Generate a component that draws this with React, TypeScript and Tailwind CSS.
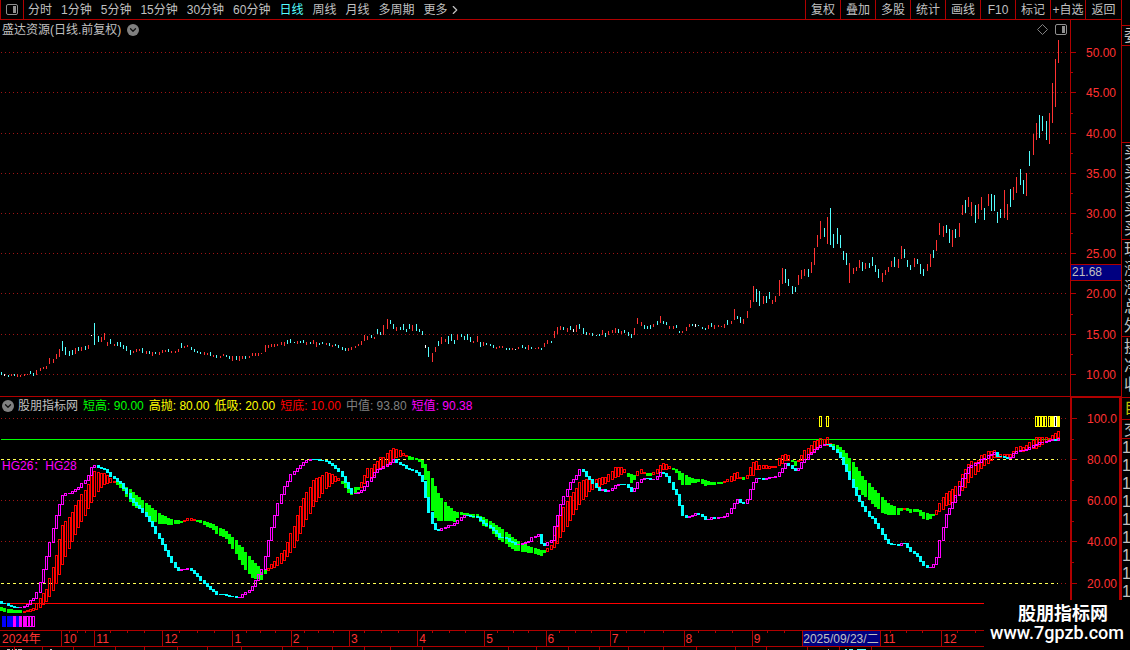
import { ChevronDown, ChevronRight } from "lucide-react";

type Tone = "r" | "c" | "w";
type Bar = { x: number; top: number; bottom: number };

const PERIODS = ["分时", "1分钟", "5分钟", "15分钟", "30分钟", "60分钟", "日线", "周线", "月线", "多周期"];
const ACTIONS = ["复权", "叠加", "多股", "统计", "画线", "F10", "标记", "+自选"];

// x, high, low + tone (r = up, c = down, w = flat)
const CANDLES = `
1,372,375c 4,374,376w 8,375,377c 11,374,376r 14,374,376c 17,374,377r 20,375,377r 24,374,376r 27,374,375r 30,371,374c
33,373,376c 36,370,375r 40,368,371r 43,367,369r 46,366,369r 49,358,364r 53,359,363r 56,354,359r 59,349,357r 62,341,351c
65,347,355c 69,351,356c 72,350,355c 75,348,354r 78,347,351c 81,347,351r 85,346,350c 88,345,349r 91,335,336w 94,323,345c
98,336,342c 101,337,342r 104,333,340r 107,342,346r 110,339,344c 114,344,346r 117,342,346c 120,342,347c 123,345,349c
126,346,351c 130,350,355c 133,351,353r 136,349,352r 139,349,351r 142,348,353c 146,351,354r 149,351,354c 152,352,356r
155,352,354c 159,352,355r 162,350,353r 165,350,352r 168,349,352c 171,351,353r 175,351,353r 178,349,352r 181,343,348c
184,346,348r 187,345,347r 191,347,350c 194,349,352c 197,351,353c 200,352,354c 204,352,355r 207,353,355r 210,352,356c
213,355,357r 216,355,358c 220,356,358r 223,354,356r 226,355,357c 229,356,359c 232,356,361r 236,356,360c 239,356,361r
242,356,359r 245,356,359c 249,356,358r 252,353,356r 255,353,356r 258,353,356r 261,353,354r 265,345,352r 268,345,348r
271,344,347r 274,344,347r 277,344,346r 281,342,345r 284,342,346r 287,340,344c 290,339,343c 294,342,343c 297,341,344r
300,341,343c 303,340,343c 306,342,345r 310,342,344c 313,340,344r 316,342,347r 319,343,345c 322,342,344c 326,343,345r
329,343,346c 332,345,347r 335,344,346c 338,345,348c 342,347,350c 345,348,351c 348,348,351r 351,347,350r 355,346,348r
358,344,346r 361,341,345r 364,335,341r 367,336,340r 371,335,338c 374,337,339r 377,329,334c 380,332,335c 383,325,335r
387,319,329r 390,320,324c 393,324,329c 396,327,331r 400,327,330c 403,324,330c 406,329,332c 409,324,329c 412,325,331r
416,324,331c 419,329,332c 422,331,335c 425,345,348w 428,347,357c 432,353,362r 435,347,352r 438,341,346c 441,337,344r
445,339,342r 448,336,344c 451,334,341c 454,340,344c 457,334,340r 461,334,337c 464,336,340c 467,334,340c 470,337,342c
473,341,343r 477,336,342r 480,342,347c 483,342,346r 486,343,345c 490,344,346c 493,345,348c 496,347,349r 499,346,348r
502,346,348r 506,348,350c 509,348,350c 512,348,350r 515,349,350w 518,347,349r 522,345,348c 525,347,349c 528,345,350r
531,347,349c 535,348,349r 538,347,349r 541,348,350c 544,343,347r 547,340,344r 551,341,343c 554,331,338r 557,327,334r
560,326,330r 563,327,330c 567,328,332r 570,326,330c 573,329,332w 576,325,332r 579,324,329c 583,328,334c 586,332,335c
589,333,335r 592,333,336c 596,335,336c 599,334,336c 602,330,335r 605,333,337c 608,331,335r 612,330,333r 615,328,333r
618,329,333c 621,331,334r 624,330,333c 628,332,336c 631,334,338c 634,328,335r 637,318,324r 641,322,326r 644,325,329c
647,326,329c 650,325,329c 653,324,327r 657,321,325c 660,316,323r 663,321,324c 666,322,325c 669,326,329r 673,326,329r
676,325,328c 679,331,333c 682,331,333r 686,327,331r 689,324,327r 692,324,326c 695,324,327w 698,325,326c 702,327,329c
705,328,330c 708,325,329r 711,323,327c 714,325,329r 718,325,327r 721,326,327r 724,324,328r 727,320,325c 731,321,324r
734,309,320r 737,316,319c 740,317,323c 743,319,324r 747,311,318r 750,300,308r 753,286,302r 756,289,302c 759,291,306c
763,296,304r 766,296,303c 769,292,299c 772,300,304r 775,296,302r 779,280,296r 782,268,284r 785,269,283c 788,279,286c
792,286,294c 795,287,292c 798,275,285r 801,270,279r 804,269,276r 808,269,277c 811,262,273r 814,248,265r 817,235,247r
820,221,239r 824,228,237c 827,217,244r 830,208,245c 833,234,248c 837,228,244c 840,235,248c 843,251,260c 846,253,265c
849,263,283r 853,268,274r 856,267,271r 859,260,268r 862,262,271c 865,263,269r 869,263,268c 872,257,266c 875,265,272c
878,269,278c 882,273,282r 885,270,275r 888,267,272r 891,261,267r 894,257,267c 898,259,268r 901,246,259r 904,249,258c
907,260,267c 910,265,270c 914,258,267r 917,259,264c 920,264,274c 923,269,276c 927,264,271r 930,254,267r 933,250,258c
936,240,251r 939,223,235r 943,226,237r 946,225,233c 949,229,243c 952,230,247r 955,229,238c 959,223,237r 962,205,215r
965,200,213c 968,197,207r 971,202,216r 975,205,223c 978,204,219r 981,197,210r 984,208,220c 988,194,206r 991,194,211c
994,195,211c 997,212,223c 1000,209,218c 1004,190,218r 1007,204,220r 1010,189,207c 1013,187,200r 1016,177,193r
1020,169,185c 1023,180,194c 1026,173,196r 1029,151,166c 1033,134,155r 1036,123,140r 1039,115,138c 1042,116,131c
1046,121,140c 1049,113,144r 1052,83,123r 1055,59,107r 1058,40,63r`;

// short-term line: x, y
const FAST = `
1,603 4,603 8,605 11,606 17,607 20,607 24,606 27,604 30,600 33,598 36,592 40,582 43,569 46,556 49,542 53,528 56,515 59,504
62,495 65,493 69,493 72,491 75,489 78,487 81,483 85,480 88,475 91,467 94,465 98,467 101,468 104,469 107,472 110,476
114,478 117,481 120,483 123,488 126,493 130,498 133,502 136,505 139,508 142,512 146,516 149,521 152,526 155,533 159,538
162,544 165,550 168,556 171,562 175,567 178,570 181,569 187,568 191,570 194,573 197,576 200,580 204,583 207,586 210,589
213,591 216,594 220,594 223,594 226,595 232,596 236,597 239,597 242,594 245,592 249,590 252,586 255,580 258,574 261,569
265,556 268,540 271,527 274,515 277,503 281,494 284,486 287,481 290,474 294,471 297,468 300,465 303,462 306,460 313,459
320,460 326,461 329,463 332,465 335,468 338,471 342,476 345,482 348,488 351,493 355,493 358,492 361,490 364,486 367,481
371,477 374,472 377,469 380,468 383,466 387,464 390,462 393,459 396,462 400,464 403,465 406,468 409,469 412,470 416,472
419,475 422,481 425,497 428,512 432,523 435,529 438,530 441,528 445,527 448,525 451,525 454,523 457,520 461,517 464,515
467,515 473,516 477,517 480,520 483,523 490,527 493,530 496,533 499,537 506,538 509,541 512,542 515,544 522,543 525,542
528,541 531,537 535,536 538,534 541,543 544,545 547,542 551,540 554,526 557,515 560,504 563,496 567,489 570,482 573,479
576,475 579,469 583,471 586,476 589,479 592,483 596,487 599,490 602,489 605,491 608,490 612,488 615,485 618,484 624,484
628,487 631,491 634,488 637,482 641,479 644,478 653,479 657,476 660,472 663,473 666,476 669,482 673,489 676,494 679,505
682,515 686,517 689,516 692,515 695,513 698,514 702,516 705,519 708,519 711,517 714,518 721,517 724,516 727,513 731,508
734,503 737,499 740,502 743,503 747,499 750,489 753,482 756,478 763,479 769,477 775,476 779,472 782,468 785,463 788,465
792,468 795,470 798,468 801,462 804,459 808,454 811,452 814,449 817,447 820,445 827,444 830,446 833,449 837,452 840,457
843,464 846,471 849,479 853,487 856,495 859,501 862,506 865,511 869,516 872,518 875,523 878,528 882,534 885,539 888,543
891,544 898,545 901,543 904,543 907,547 910,551 914,553 917,556 920,561 923,565 927,567 930,567 933,564 936,557 939,540
943,527 946,514 949,508 952,502 955,495 959,486 962,478 965,473 968,467 971,465 975,463 978,462 981,459 984,458 988,455
991,454 994,452 997,456 1004,457 1007,458 1010,457 1013,453 1016,451 1023,450 1026,449 1029,447 1033,445 1036,444
1039,442 1046,441 1049,440 1052,439 1055,440 1058,438`;

// mid-term band, one line per run: x, top, bottom
const SLOW: [("up" | "down"), string][] = [
  ["down", "1,607,610 8,609,612 20,610,612"],
  ["up", "24,611,612 33,608,610 36,603,609 40,598,607 43,593,604 46,589,601 49,578,596 53,567,590 56,555,583 59,539,574 62,525,564 65,521,556 69,517,548 72,512,541 75,505,534 78,500,527 81,494,521 85,490,515 88,484,508 91,475,502 94,471,496 98,472,491 101,473,487 104,473,484 107,475,483 110,478,482 114,481,482"],
  ["down", "117,482,484 120,484,487 123,486,490 126,487,496 130,489,501 133,492,505 139,497,508 142,500,512 146,503,516 149,505,519 152,508,520 155,510,521 159,513,523 165,516,523 171,519,524 178,520,523 181,521,522"],
  ["up", "184,520,521 187,518,520 191,518,520 194,519,520"],
  ["down", "197,520,521 200,520,522 204,521,524 210,523,527 213,524,529 216,526,533 223,529,536 226,531,538 229,534,543 232,537,548 236,540,553 239,545,559 242,547,564 245,552,569 249,556,573 252,560,577 255,563,578 258,566,578 261,572,579 265,569,573"],
  ["up", "268,568,570 271,564,568 274,561,567 277,557,565 281,553,563 284,550,560 287,542,556 290,533,552 294,526,547 297,515,540 300,506,533 303,498,526 306,492,519 310,487,513 313,480,506 316,478,501 320,476,496 323,474,491 326,472,488 329,473,486 332,474,483 335,476,481 338,478,480"],
  ["down", "342,481,483 345,482,487 348,486,492 351,488,494 355,487,493 358,487,489"],
  ["up", "361,482,487 364,475,483 367,468,477 371,468,478 374,464,475 377,461,472 380,457,469 383,457,467 387,453,465 390,450,463 393,448,459 396,449,457 400,450,456 403,453,455 406,455,456"],
  ["down", "409,456,459 416,458,459 419,459,461 422,460,467 425,464,479 428,471,497 432,478,510 435,486,517 438,493,520 441,498,520 445,502,520 448,506,520 451,508,520 454,511,521 457,512,517 461,512,514 467,513,515 473,514,517 477,514,517 480,516,521 483,517,525 490,521,528 493,523,533 499,527,539 502,529,541 506,532,543 509,534,546 512,537,548 515,539,550 522,543,551 531,547,552 535,548,553 541,550,555 544,550,552"],
  ["up", "547,548,551 551,545,549 554,535,547 557,525,543 560,515,537 563,507,531 567,501,526 570,496,520 573,492,514 576,488,509 579,482,504 583,480,499 586,479,496 589,479,491 592,479,489 596,479,487 602,477,484 605,477,483 608,474,481 612,471,479 615,467,477 621,467,474 624,469,472"],
  ["down", "628,473,476 631,474,482 634,475,479"],
  ["up", "637,471,475 641,469,473 644,472,473"],
  ["down", "647,473,475 650,473,475"],
  ["up", "653,472,474 657,469,473 660,465,472 663,463,469 666,464,469 669,466,468"],
  ["down", "673,468,469 676,469,472 679,471,479 682,473,484 686,475,484 689,477,484 692,478,482 698,479,481 702,479,483 705,480,485 708,481,484 714,482,484 721,482,483"],
  ["up", "724,481,482 727,479,481 731,476,481 734,473,480 737,472,478 740,477,478"],
  ["down", "743,477,479"],
  ["up", "747,475,478 750,467,475 753,462,475 756,461,469 759,465,469 763,465,468 775,466,467 779,458,465 782,455,463 785,454,460 788,455,460"],
  ["down", "792,460,461 795,461,465"],
  ["up", "798,460,461 801,455,460 804,450,459 808,448,457 811,445,453 814,441,451 817,440,448 820,438,447 824,439,445 827,437,445 830,443,444"],
  ["down", "833,444,447 837,445,452 840,447,455 843,450,460 846,453,463 849,458,471 853,462,479 856,467,487 859,471,489 862,476,494 865,480,496 869,483,499 872,487,503 875,490,506 878,493,508 882,497,512 885,500,513 888,503,514 891,505,514 898,508,514 901,508,510"],
  ["up", "904,508,509"],
  ["down", "907,508,510 910,509,512 917,509,511 920,510,515 923,512,518 927,513,519 930,514,518 933,514,515"],
  ["up", "936,510,514 939,503,511 943,497,509 946,493,505 952,489,502 955,486,497 959,481,494 962,474,490 965,469,487 968,464,482 971,461,477 975,462,474 978,460,471 981,455,468 984,454,465 988,451,463 991,451,460 994,450,457 997,454,457 1004,454,457 1010,454,457 1013,451,455 1016,447,453 1020,446,451 1023,447,451 1029,442,449 1033,440,448 1036,437,448 1046,437,442 1049,438,440 1052,435,439 1055,433,439 1058,431,437"],
];

const PRICE_LABELS: [string, number][] = [
  ["50.00", 52], ["45.00", 92], ["40.00", 133], ["35.00", 173], ["30.00", 213],
  ["25.00", 253], ["20.00", 293], ["15.00", 334], ["10.00", 374],
];
const LEVEL_LABELS: [string, number][] = [
  ["100.0", 418], ["80.00", 459], ["60.00", 500], ["40.00", 541], ["20.00", 583],
];

const READOUTS = [
  { name: "短高", value: "90.00", className: "text-[#00ff00]" },
  { name: "高抛", value: "80.00", className: "text-[#ffff00]" },
  { name: "低吸", value: "20.00", className: "text-[#ffff00]" },
  { name: "短底", value: "10.00", className: "text-[#ff0000]" },
  { name: "中值", value: "93.80", className: "text-[#808080]" },
  { name: "短值", value: "90.38", className: "text-[#ff00ff]" },
];

const MONTHS = [
  { label: "2024年", span: 61 },
  { label: "10", span: 32 },
  { label: "11", span: 68 },
  { label: "12", span: 70 },
  { label: "1", span: 58 },
  { label: "2", span: 58 },
  { label: "3", span: 68 },
  { label: "4", span: 67 },
  { label: "5", span: 61 },
  { label: "6", span: 64 },
  { label: "7", span: 74 },
  { label: "8", span: 68 },
  { label: "9", span: 50 },
  { label: "2025/09/23/二", span: 79, active: true },
  { label: "11", span: 60 },
  { label: "12", span: 183 },
];

const MONTH_TICKS = [
  69, 77, 85, 110, 127, 144, 179, 197, 214, 246, 260, 275, 304, 318, 333, 364, 381, 398, 432, 449, 465, 497, 513, 528,
  559, 575, 591, 626, 644, 663, 698, 715, 732, 767, 784, 890, 906, 922, 957, 975,
];
const FOOT_TICKS = [
  14, 42, 73, 115, 144, 177, 207, 241, 282, 307, 332, 364, 390, 422, 508, 536, 568, 599, 628, 663, 696, 735, 766, 807,
  839, 871,
];

const QUOTE_STRIP = [
  { height: "h-[25px]", border: "", items: "" },
  { height: "h-5", border: "border-t", items: "委" },
  { height: "h-[97px]", border: "border-t", items: "" },
  { height: "h-[97px]", border: "border-t", items: "买买买买买" },
  { height: "h-[97px]", border: "border-t", items: "现涨涨总外" },
  { height: "h-[61px]", border: "border-t", items: "换净收" },
];

const parse = (s: string) => s.trim().split(/\s+/).map((p) => p.split(",").map((n) => parseInt(n, 10)));

const candles = CANDLES.trim().split(/\s+/).map((p) => {
  const [x, top, bottom] = p.split(",").map((n) => parseInt(n, 10));
  return { x, top, bottom, tone: p.slice(-1) as Tone };
});
const xs = candles.map((c) => c.x);

function valueAt(points: number[][], x: number, col: number) {
  const i = points.findIndex((p) => p[0] >= x);
  if (i <= 0) return points[i === 0 ? 0 : points.length - 1][col];
  const a = points[i - 1];
  const b = points[i];
  return Math.round(a[col] + ((b[col] - a[col]) * (x - a[0])) / (b[0] - a[0]));
}

const fastPoints = parse(FAST);
const fastRising: Bar[] = [];
const fastFalling: Bar[] = [];
xs.forEach((x, i) => {
  const y = valueAt(fastPoints, x, 1);
  const prev = i ? valueAt(fastPoints, xs[i - 1], 1) : y - 2;
  const bar = { x, top: Math.min(y, prev), bottom: Math.max(y, prev) + 1 };
  (y < prev || (y === prev && valueAt(fastPoints, x + 3, 1) < y) ? fastRising : fastFalling).push(bar);
});

const slowBars = (kind: "up" | "down"): Bar[] =>
  SLOW.filter(([k]) => k === kind).flatMap(([, s]) => {
    const points = parse(s);
    return xs
      .filter((x) => x >= points[0][0] && x <= points[points.length - 1][0])
      .map((x) => ({ x, top: valueAt(points, x, 1), bottom: valueAt(points, x, 2) + 1 }));
  });

const solid = (bars: Bar[], width = 3) =>
  bars.map((b) => `M${b.x - (width - 1) / 2} ${b.top}h${width}V${b.bottom}h-${width}z`).join("");

// hollow bar: outer box plus a reversed inner box
const hollow = (bars: Bar[]) =>
  bars
    .map((b) => {
      const outer = `M${b.x - 1} ${b.top}h3V${b.bottom}h-3z`;
      return b.bottom - b.top > 2 ? `${outer}M${b.x} ${b.top + 1}V${b.bottom - 1}h1V${b.top + 1}z` : outer;
    })
    .join("");

const TONE_FILL: Record<Tone, string> = { r: "#ff3232", c: "#54ffff", w: "#ffffff" };

function GridLine({ y }: { y: number }) {
  return <path d={`M1 ${y + 0.5}H1068`} stroke="#a01414" strokeDasharray="1 3" />;
}

function PriceChart() {
  return (
    <svg className="block h-full w-full" viewBox="0 20 1070 376" preserveAspectRatio="none" shapeRendering="crispEdges">
      {PRICE_LABELS.map(([, y]) => (
        <GridLine key={y} y={y} />
      ))}
      {(["r", "c", "w"] as Tone[]).map((tone) => (
        <path key={tone} d={solid(candles.filter((c) => c.tone === tone), 1)} fill={TONE_FILL[tone]} />
      ))}
    </svg>
  );
}

function IndicatorChart() {
  return (
    <svg className="block h-full w-full" viewBox="0 397 1070 233" preserveAspectRatio="none" shapeRendering="crispEdges">
      {LEVEL_LABELS.map(([, y]) => (
        <GridLine key={y} y={y} />
      ))}
      {[459, 583].map((y) => (
        <g key={y}>
          <path d={`M1 ${y + 0.5}H1058`} stroke="#000000" />
          <path d={`M1 ${y + 0.5}H1058`} stroke="#ffff54" strokeDasharray="3 3" />
        </g>
      ))}
      <path d="M1 439.5H1059" stroke="#00ff00" />
      <path d="M1 603.5H1070" stroke="#ff0000" />
      <path d={solid(slowBars("down"))} fill="#00ff00" />
      <path d={hollow(slowBars("up"))} fill="#ff0000" />
      <path d={solid(fastFalling)} fill="#00ffff" />
      <path d={hollow(fastRising)} fill="#ff00ff" />

      <path d="M2 616h4v11h-4zM7 616h6v11h-6zM16 616h3v11h-3z" fill="#0000ff" />
      <path d="M13 616h3v11h-3zM19 616h3v11h-3zM23 616h3v11h-3z" fill="#ff00ff" />
      <path d="M26.5 616.5h2v10h-2zM29.5 616.5h2v10h-2zM32.5 616.5h2v10h-2z" fill="none" stroke="#ff00ff" />

      <path
        d="M819.5 416.5h2v10h-2zM826.5 416.5h2v10h-2zM1035.5 416.5h2v10h-2zM1038.5 416.5h2v10h-2zM1041.5 416.5h2v10h-2zM1044.5 416.5h2v10h-2zM1048.5 416.5h2v10h-2z"
        fill="none"
        stroke="#ffff00"
      />
      <path d="M1051 416h9v11h-9z" fill="#ffff00" />
      <path d="M1054 416h3v11h-3z" fill="#ffffff" />
      <path d="M1055 417h1v9h-1z" fill="#000000" />
    </svg>
  );
}

function Axis({ labels, from, height, minor }: { labels: [string, number][]; from: number; height: number; minor: number[] }) {
  return (
    <svg width="50" height={height} viewBox={`0 ${from} 50 ${height}`} className="block">
      <g fill="#b00000" shapeRendering="crispEdges">
        {labels.map(([, y]) => (
          <rect key={y} x="0" y={y} width="5" height="1" />
        ))}
        {minor.map((y) => (
          <rect key={y} x="0" y={y} width="2" height="1" />
        ))}
      </g>
      <g fill="#ff3232" fontSize="12">
        {labels.map(([label, y]) => (
          <text key={label} x="45" y={y + 5} textAnchor="end">
            {label}
          </text>
        ))}
      </g>
    </svg>
  );
}

function PanelIcon() {
  return (
    <svg width="12" height="11" viewBox="0 0 12 11" className="block">
      <rect x="0.5" y="0.5" width="11" height="10" rx="1.5" fill="none" stroke="#909090" />
      <rect x="7" y="2" width="3" height="7" fill="#909090" />
    </svg>
  );
}

function Collapse({ label }: { label: string }) {
  return (
    <button type="button" aria-label={label} className="flex h-3 w-3 items-center justify-center rounded-full bg-[#808080]">
      <ChevronDown size={10} strokeWidth={3} color="#101010" />
    </button>
  );
}

function Toolbar() {
  return (
    <header className="flex h-5 border-b border-[#b00000] text-[#c0c0c0]">
      <button type="button" aria-label="侧栏" className="flex w-6 items-center justify-center border-x border-[#b00000]">
        <PanelIcon />
      </button>
      <nav className="ml-1 flex flex-1 items-center gap-[9px]">
        {PERIODS.map((p) => (
          <button key={p} type="button" className={p === "日线" ? "text-[#54ffff]" : ""}>
            {p}
          </button>
        ))}
        <button type="button" className="flex items-center">
          更多
          <ChevronRight size={14} strokeWidth={2} absoluteStrokeWidth={false} />
        </button>
      </nav>
      {ACTIONS.map((a) => (
        <button key={a} type="button" className="w-[35px] border-l border-[#b00000] whitespace-nowrap">
          {a}
        </button>
      ))}
      <button type="button" className="w-9 border-l border-[#b00000]">
        返回
      </button>
    </header>
  );
}

function Timeline() {
  return (
    <footer className="border-t border-[#b00000]">
      <div className="relative flex h-[15px] text-[#ff3232]">
        {MONTHS.map((m, i) => (
          <div
            key={i}
            className={
              m.active
                ? "overflow-hidden border-x border-[#b00000] bg-[#000080] whitespace-nowrap text-[#c0c0c0]"
                : i === 0 || i === 14
                  ? "overflow-hidden pl-[2px] whitespace-nowrap"
                  : "overflow-hidden border-l border-[#b00000] pl-px whitespace-nowrap"
            }
            style={{ flex: `${m.span} 1 0px` }}
          >
            {m.label}
          </div>
        ))}
        <svg
          className="absolute inset-x-0 top-0 h-[2px] w-full"
          viewBox="0 0 1121 2"
          preserveAspectRatio="none"
          shapeRendering="crispEdges"
        >
          <path d={MONTH_TICKS.map((x) => `M${x} 0h1v2h-1z`).join("")} fill="#b00000" />
        </svg>
      </div>
      <svg
        className="block h-1 w-full border-t border-[#b00000]"
        viewBox="0 0 1121 3"
        preserveAspectRatio="none"
        shapeRendering="crispEdges"
      >
        <path d={FOOT_TICKS.map((x) => `M${x} 0h1v3h-1z`).join("")} fill="#b00000" />
        <path d="M7 2h3v1h-3zM12 2h1v1h-1zM15 2h2v1h-2zM18 2h4v1h-4zM50 2h2v1h-2zM828 2h1v1h-1z" fill="#c0c0c0" />
        <path d="M845 2h2v1h-2zM849 2h4v1h-4zM857 2h9v1h-9z" fill="#54ffff" />
      </svg>
    </footer>
  );
}

function QuoteStrip() {
  return (
    <aside className="w-[9px] shrink-0 overflow-hidden border-l border-[#b00000] text-[16px] leading-[19px] text-[#c0c0c0]">
      {QUOTE_STRIP.map((s, i) => (
        <div key={i} className={`${s.height} ${s.border} border-[#b00000] pl-[2px]`}>
          {s.items.split("").map((ch, j) => (
            <div key={j} className="w-4">
              {ch}
            </div>
          ))}
        </div>
      ))}
      <div className="h-[22px] border-t border-[#b00000] pl-[2px] text-[#c0c000]">
        <div className="w-4">自</div>
      </div>
      <div className="h-[19px] border-t border-[#b00000] pl-[2px]">
        <div className="w-4">交</div>
      </div>
      <div className="border-t border-[#b00000] leading-[18px]">
        {Array.from({ length: 9 }, (_, i) => (
          <div key={i} className="w-4">
            1
          </div>
        ))}
      </div>
    </aside>
  );
}

export default function App() {
  return (
    <div className="relative flex min-h-screen w-full overflow-hidden bg-black font-['Liberation_Sans','Noto_Sans_CJK_SC',sans-serif] text-[12px] leading-[16px] text-[#c0c0c0]">
      <main className="min-w-0 flex-1">
        <Toolbar />

        <section className="flex h-[376px]">
          <div className="relative min-w-0 flex-1">
            <PriceChart />
            <div className="absolute top-[2px] left-[2px] flex items-center gap-[6px]">
              <h1>盛达资源(日线.前复权)</h1>
              <Collapse label="收起主图" />
            </div>
            <div className="absolute top-1 right-[3px] flex items-center gap-[7px]">
              <svg width="11" height="11" viewBox="0 0 11 11">
                <path d="M5.5 0.5l5 5l-5 5l-5 -5z" fill="none" stroke="#808080" />
              </svg>
              <PanelIcon />
            </div>
          </div>
          <div className="relative w-[51px] border-l border-[#b00000]">
            <Axis labels={PRICE_LABELS} from={20} height={376} minor={[72, 113, 153, 193, 233, 314, 354]} />
            <div className="absolute inset-x-0 top-[244px] h-[17px] border-y border-[#b00000] bg-[#000080] pl-px leading-[15px]">
              21.68
            </div>
          </div>
        </section>

        <section className="flex h-[234px] border-t border-[#b00000]">
          <div className="relative min-w-0 flex-1">
            <IndicatorChart />
            <div className="absolute top-px left-[2px] flex items-center gap-[5px] whitespace-nowrap">
              <div className="flex items-center gap-1">
                <Collapse label="收起副图" />
                <h2>股朋指标网</h2>
              </div>
              {READOUTS.map((r) => (
                <span key={r.name} className={r.className}>
                  {r.name}: {r.value}
                </span>
              ))}
            </div>
            <div className="absolute top-[61px] left-[2px] text-[#ff00ff]">HG26：HG28</div>
          </div>
          <div className="w-[51px] border-t border-r-2 border-l-2 border-[#b00000]">
            <Axis labels={LEVEL_LABELS} from={398} height={232} minor={[439, 480, 521, 562]} />
          </div>
        </section>

        <Timeline />
      </main>

      <QuoteStrip />

      <div className="absolute right-0 bottom-0 flex h-[50px] w-[146px] flex-col items-center bg-black pt-1 whitespace-nowrap text-white">
        <div className="pl-3 text-[18px] leading-[20px] font-bold">股朋指标网</div>
        <div className="font-['Roboto',sans-serif] text-[18px] leading-[18px] font-medium">www.7gpzb.com</div>
      </div>
    </div>
  );
}
